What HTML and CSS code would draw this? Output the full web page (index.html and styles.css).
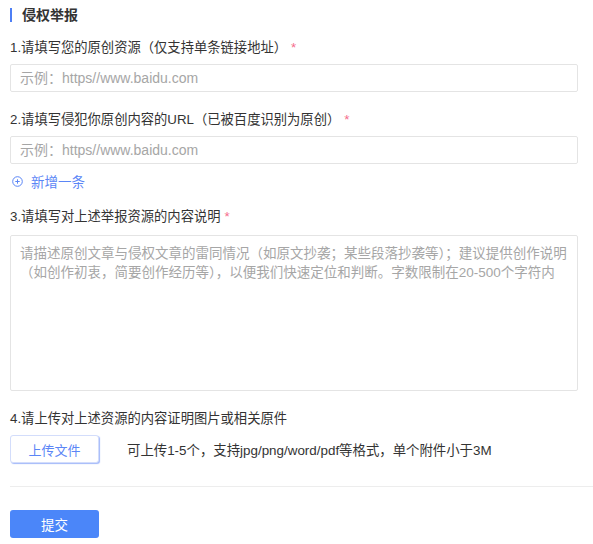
FILE: index.html
```html
<!DOCTYPE html>
<html lang="zh">
<head>
    <meta charset="UTF-8">
    <meta name="viewport" content="width=device-width, initial-scale=1.0">
    <title>侵权举报</title>
    <link rel="stylesheet" href="styles.css">
</head>
<body>
    <div id="report">
        <div class="title">侵权举报</div>

        <div class="field">
            <div class="label">1.请填写您的原创资源（仅支持单条链接地址）<span class="star">*</span></div>
            <input type="text" class="text-input" placeholder="示例：https//www.baidu.com">
        </div>

        <div class="field">
            <div class="label">2.请填写侵犯你原创内容的URL（已被百度识别为原创）<span class="star">*</span></div>
            <input type="text" class="text-input" placeholder="示例：https//www.baidu.com">
            <div class="add-row">
                <svg class="add-icon" width="11" height="11" viewBox="0 0 11 11">
                    <circle cx="5.5" cy="5.5" r="4.8" fill="none" stroke="#5b86f6" stroke-width="1"/>
                    <path d="M3.3 5.5h4.4M5.5 3.3v4.4" stroke="#5b86f6" stroke-width="1"/>
                </svg>
                <span>新增一条</span>
            </div>
        </div>

        <div class="field">
            <div class="label">3.请填写对上述举报资源的内容说明<span class="star">*</span></div>
            <textarea class="text-area" placeholder="请描述原创文章与侵权文章的雷同情况（如原文抄袭；某些段落抄袭等）；建议提供创作说明（如创作初衷，简要创作经历等），以便我们快速定位和判断。字数限制在20-500个字符内"></textarea>
        </div>

        <div class="field">
            <div class="label">4.请上传对上述资源的内容证明图片或相关原件</div>
            <div class="upload-row">
                <button class="upload-btn">上传文件</button>
                <span class="upload-tip">可上传1-5个，支持jpg/png/word/pdf等格式，单个附件小于3M</span>
            </div>
        </div>

        <div class="divider"></div>

        <button class="submit-btn">提交</button>
    </div>
</body>
</html>
```

FILE: styles.css
```css
body{
    margin: 0;
    font-family: "Liberation Sans", "Noto Sans CJK SC", sans-serif;
    color: #333;
    background: #fff;
}
#report{
    padding: 8px 0 0 10px;
}
.title{
    border-left: 2px solid #4e7ff5;
    padding-left: 10px;
    height: 14px;
    line-height: 14px;
    font-size: 14px;
    font-weight: bold;
    color: #333;
    margin-bottom: 17px;
}
.field{
    margin-bottom: 19px;
}
.label{
    font-size: 13.3px;
    line-height: 18px;
    height: 18px;
    margin-bottom: 7px;
}
.star{
    color: #f56c8c;
    margin-left: 4px;
}
.text-input, .text-area{
    display: block;
    box-sizing: border-box;
    width: 568px;
    border: 1px solid #e4e4e4;
    border-radius: 2px;
    font-family: inherit;
    color: #333;
    outline: none;
}
.text-input{
    height: 28px;
    padding: 0 9px;
    font-size: 14px;
}
.text-area{
    height: 156px;
    margin-top: 9px;
    padding: 8px 9px;
    font-size: 13.5px;
    line-height: 19px;
    resize: none;
}
.text-input::placeholder, .text-area::placeholder{
    color: #a6a6a6;
}
.add-row{
    display: flex;
    align-items: center;
    height: 16px;
    margin-top: 9px;
    padding-left: 2px;
    color: #5b86f6;
    font-size: 13.5px;
}
.add-icon{
    margin-right: 8px;
}
.upload-row{
    display: flex;
    align-items: center;
}
.upload-btn{
    width: 89px;
    height: 28px;
    border: 1px solid #d3ddfb;
    border-radius: 3px;
    background: #fff;
    box-shadow: 1px 1px 1px rgba(85,125,245,.55);
    color: #5b86f6;
    font-family: inherit;
    font-size: 13px;
    padding: 0;
}
.upload-tip{
    margin-left: 28px;
    font-size: 13.4px;
    color: #333;
}
.divider{
    height: 1px;
    background: #ededed;
    margin: 23px 0;
}
.submit-btn{
    width: 89px;
    height: 28px;
    border: none;
    border-radius: 3px;
    background: #4b86f9;
    color: #fff;
    font-family: inherit;
    font-size: 13.5px;
    padding: 0;
}
```
